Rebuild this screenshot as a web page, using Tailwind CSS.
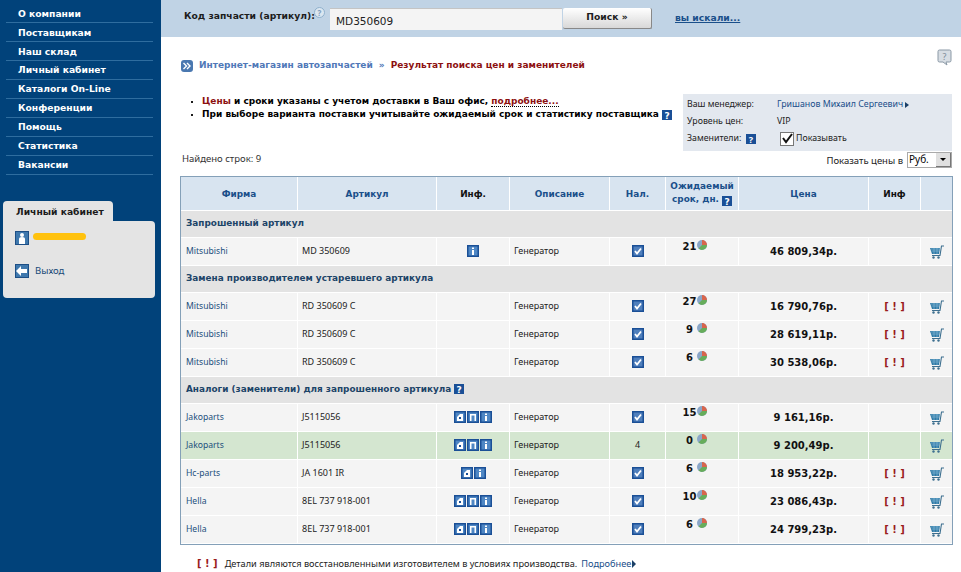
<!DOCTYPE html>
<html lang="ru">
<head>
    <meta charset="UTF-8">
    <meta name="viewport" content="width=device-width, initial-scale=1.0">
    <title>Результат поиска цен и заменителей</title>
    <script src="https://cdn.jsdelivr.net/npm/@tailwindcss/browser@4"></script>
</head>
<body class="bg-white font-['Noto_Sans',sans-serif] text-[9.5px] text-black overflow-hidden">
<div class="flex h-[572px] w-[961px] overflow-hidden">

    <!-- Sidebar -->
    <aside class="w-[161px] shrink-0 bg-[#01427a]">
        <nav class="pt-[4px] pl-[6px] pr-[8px] font-['DejaVu_Sans',sans-serif] text-[9.2px] font-bold text-white">
            <a class="block h-[19px] pl-[12px] leading-[19px] border-b border-[#2f6d9f]">О компании</a>
            <a class="block h-[19px] pl-[12px] leading-[19px] border-b border-[#2f6d9f]">Поставщикам</a>
            <a class="block h-[19px] pl-[12px] leading-[19px] border-b border-[#2f6d9f]">Наш склад</a>
            <a class="block h-[19px] pl-[12px] leading-[18px] border-b border-[#2f6d9f]">Личный кабинет</a>
            <a class="block h-[19px] pl-[12px] leading-[18px] border-b border-[#2f6d9f]">Каталоги On-Line</a>
            <a class="block h-[19px] pl-[12px] leading-[18px] border-b border-[#2f6d9f]">Конференции</a>
            <a class="block h-[19px] pl-[12px] leading-[18px] border-b border-[#2f6d9f]">Помощь</a>
            <a class="block h-[19px] pl-[12px] leading-[18px] border-b border-[#2f6d9f]">Статистика</a>
            <a class="block h-[19px] pl-[12px] leading-[18px] border-b border-[#2f6d9f]">Вакансии</a>
        </nav>

        <!-- Cabinet panel -->
        <div class="mt-[26px] ml-[3px] w-[152px]">
            <div class="w-[110px] h-[20px] bg-[#e4e4e4] rounded-t-[4px] pl-[13px] leading-[22px] font-['DejaVu_Sans',sans-serif] text-[9.2px] font-bold text-[#1c1c1c] whitespace-nowrap">Личный кабинет</div>
            <div class="h-[77px] bg-[#e4e4e4] rounded-b-[4px] rounded-tr-[4px] pl-[12px] pt-[10px]">
                <div class="flex items-center h-[14px]">
                    <svg width="14" height="14" viewBox="0 0 14 14"><rect width="14" height="14" fill="#3f78ad"/><rect x=".5" y=".5" width="13" height="13" fill="none" stroke="#1d4f86"/><circle cx="7" cy="4" r="2" fill="#fff"/><path d="M4 13V8q0-2 3-2t3 2v5z" fill="#fff"/></svg>
                    <span class="ml-[4px] mt-[-3px] w-[53px] h-[7px] rounded-full bg-[#ffc20e]"></span>
                </div>
                <div class="flex items-center h-[14px] mt-[19px] text-[#1a4a78]">
                    <svg width="14" height="14" viewBox="0 0 14 14"><rect width="14" height="14" fill="#3f78ad"/><rect x=".5" y=".5" width="13" height="13" fill="none" stroke="#1d4f86"/><path d="M1 7l5-5v3h6v4H6v3z" fill="#fff"/></svg>
                    <span class="ml-[6px]">Выход</span>
                </div>
            </div>
        </div>
    </aside>

    <main class="flex-1 flex flex-col min-w-0">
        <!-- Search bar -->
        <div class="h-[37px] shrink-0 bg-[#c0d3e5] flex pl-[23px] pt-[8px]">
            <span class="w-[128px] pt-[1px] font-['DejaVu_Sans',sans-serif] text-[9.2px] font-bold text-[#1c1c1c] leading-[14px] whitespace-nowrap">Код запчасти (артикул):</span>
            <svg class="mt-[-1px] ml-[2px]" width="11" height="11" viewBox="0 0 11 11"><circle cx="5.5" cy="5.5" r="5" fill="#dbe6f0" stroke="#8fb0cc"/><text x="5.5" y="8.5" text-anchor="middle" font-size="8" font-weight="700" fill="#7f9fbd">?</text></svg>
            <div class="ml-[5px] w-[232px] h-[22px] bg-[#f4f4f4] border-t border-[#c4c4c4] pl-[6px] leading-[24px] font-['DejaVu_Sans',sans-serif] text-[10.5px] text-[#222]">MD350609</div>
            <button class="ml-[1px] w-[89px] h-[21px] pb-[3px] rounded-[2px] bg-gradient-to-b from-white to-[#d8d8d8] border-b border-r border-[#888] font-['DejaVu_Sans',sans-serif] text-[9.2px] font-bold text-[#1c1c1c]">Поиск »</button>
            <a class="ml-[23px] pt-[3px] font-['DejaVu_Sans',sans-serif] text-[9.2px] font-bold text-[#1a4f8a] underline whitespace-nowrap">вы искали...</a>
        </div>

        <div class="pl-[20px] pr-[9px] flex-1">
            <!-- Breadcrumbs -->
            <div class="flex h-[57px]">
                <div class="flex items-center mt-[22px] h-[14px] font-['DejaVu_Sans',sans-serif] text-[9px] font-bold">
                    <svg width="12" height="12" viewBox="0 0 12 12"><rect width="12" height="12" rx="3" fill="#4a78b0"/><path d="M2.5 3l3 3-3 3M6 3l3 3-3 3" fill="none" stroke="#fff" stroke-width="1.4"/></svg>
                    <span class="ml-[6px] text-[#5078b8]">Интернет-магазин автозапчастей</span>
                    <span class="mx-[6px] text-[#5078b8]">»</span>
                    <span class="text-[#8c1010]">Результат поиска цен и заменителей</span>
                </div>
                <svg class="ml-auto mt-[12px]" width="15" height="17" viewBox="0 0 15 17"><path d="M2.5 1h10q1.500 0 1.500 1.500v9q0 1.500-1.500 1.500H9l1 3-4-3H2.500Q1 13 1 11.500v-9Q1 1 2.500 1z" fill="#d7dde3" stroke="#8b99a6"/><text x="7.500" y="10.500" text-anchor="middle" font-size="9" fill="#7d8b98">?</text></svg>
            </div>

            <!-- Notes and manager panel -->
            <div class="flex">
                <ul class="pt-[1px] pl-[10px] w-[502px] font-['DejaVu_Sans',sans-serif] text-[9px] font-bold leading-[13px] whitespace-nowrap">
                    <li class="flex items-center"><span class="w-[2px] h-[2px] bg-[#1c1c1c] mr-[9px]"></span><span><span class="text-[#8c1010]">Цены</span> и сроки указаны с учетом доставки в Ваш офис, <span class="text-[#8c1010] border-b border-dotted border-black">подробнее...</span></span></li>
                    <li class="flex items-center"><span class="w-[2px] h-[2px] bg-[#1c1c1c] mr-[9px]"></span><span>При выборе варианта поставки учитывайте ожидаемый срок и статистику поставщика</span>
                        <span class="ml-[3px]" data-icon="help"></span></li>
                </ul>
                <div class="w-[269px] h-[57px] bg-[#e3e8ef] pl-[4px] pt-[2px] text-[8.8px] text-[#222]">
                    <div class="flex h-[17px] items-center"><span class="w-[90px]">Ваш менеджер:</span><span class="text-[#1a4f8a] whitespace-nowrap">Гришанов Михаил Сергеевич</span><span class="ml-[2px] border-y-[3px] border-l-[4px] border-y-transparent border-l-[#1a3f66]"></span></div>
                    <div class="flex h-[17px] items-center"><span class="w-[90px]">Уровень цен:</span><span>VIP</span></div>
                    <div class="flex h-[17px] items-center"><span class="w-[59px] shrink-0">Заменители:</span><span class="w-[34px] shrink-0 flex" data-icon="help"></span>
                        <svg class="mr-[2px]" width="14" height="14" viewBox="0 0 14 14"><rect x=".5" y=".5" width="13" height="13" fill="#fff" stroke="#777"/><path d="M3 6l3 4 6-8" fill="none" stroke="#111" stroke-width="2"/></svg><span>Показывать</span></div>
                </div>
            </div>

            <!-- Found rows and currency -->
            <div class="flex h-[25px] items-start">
                <span class="mt-[1px] ml-[1px] text-[#333]">Найдено строк: 9</span>
                <span class="ml-auto mt-[3px] text-[#222]">Показать цены в</span>
                <div class="ml-[4px] mt-[1px] w-[45px] h-[16px] flex border border-[#aaa] bg-white text-[10px] leading-[13px] pl-[1px]">Руб.
                    <span class="ml-auto w-[15px] h-[14px] bg-[#e0e0e0] border-b border-r border-[#777] flex items-center justify-center"><span class="border-x-[3px] border-t-[3px] border-x-transparent border-t-black"></span></span>
                </div>
            </div>

            <!-- Results table -->
            <table class="ml-[-1px] w-[773px] table-fixed border-separate border-spacing-0 border border-[#84a0b8]">
                <colgroup>
                    <col class="w-[117px]"><col class="w-[139px]"><col class="w-[73px]"><col class="w-[100px]"><col class="w-[56px]"><col class="w-[73px]"><col class="w-[130px]"><col class="w-[52px]"><col>
                </colgroup>
                <thead>
                    <tr class="h-[34px] bg-[#d8e4f0] font-['DejaVu_Sans',sans-serif] text-[8.9px] font-bold text-[#1a4f8a]">
                        <th class="pt-[2px] border-r border-b border-white">Фирма</th>
                        <th class="pt-[2px] border-r border-b border-white">Артикул</th>
                        <th class="pt-[2px] border-r border-b border-white text-[#111]">Инф.</th>
                        <th class="pt-[2px] border-r border-b border-white">Описание</th>
                        <th class="pt-[2px] border-r border-b border-white">Нал.</th>
                        <th class="border-r border-b border-white leading-[13px]">Ожидаемый<br>срок, дн. <span class="inline-block align-[-1px]" data-icon="help"></span></th>
                        <th class="pt-[2px] border-r border-b border-white">Цена</th>
                        <th class="pt-[2px] border-r border-b border-white text-[#111]">Инф</th>
                        <th class="border-b border-white"></th>
                    </tr>
                </thead>
                <tbody id="rows"></tbody>
            </table>

            <!-- Footnote -->
            <div class="flex items-center mt-[11px] ml-[16px] text-[9.2px] text-[#222] whitespace-nowrap">
                <span class="font-['DejaVu_Sans',sans-serif] font-bold text-[#9a1c1c] text-[10px]">[ ! ]</span>
                <span class="ml-[7px]">Детали являются восстановленными изготовителем в условиях производства.</span>
                <span class="ml-[4px] text-[#1a4f8a]">Подробнее</span>
                <span class="ml-[1px] border-y-[4px] border-l-[4px] border-y-transparent border-l-[#1a3f66]"></span>
            </div>
        </div>
    </main>
</div>

<script>
    // Small blue square icons
    const helpIcon = `<svg class="inline-block" width="10" height="10" viewBox="0 0 10 10"><rect width="10" height="10" fill="#1a4f96"/><text x="5" y="8.500" text-anchor="middle" font-size="9" font-weight="700" fill="#fff">?</text></svg>`;
    const squareIcon = inner => `<svg class="inline-block" width="12" height="12" viewBox="0 0 12 12"><rect width="12" height="12" fill="#1a4f96"/><rect x="1.500" y="1.500" width="9" height="9" fill="#4f87c4"/>${inner}</svg>`;
    const icons = {
        h: squareIcon(`<path d="M3 10V6l3-3h3v7z" fill="#fff"/><rect x="5" y="6" width="2" height="2" fill="#1a4f96"/>`),
        p: squareIcon(`<path d="M3 10V3h6v7H7.500V4.500h-3V10z" fill="#fff"/>`),
        i: squareIcon(`<rect x="5" y="2.500" width="2" height="1.500" fill="#fff"/><rect x="5" y="5" width="2" height="5" fill="#fff"/>`)
    };
    const checkIcon = `<svg class="inline-block" width="12" height="12" viewBox="0 0 12 12"><rect width="12" height="12" fill="#1a4f96"/><rect x="1.500" y="1.500" width="9" height="9" fill="#4f7fbc"/><path d="M3 6l2 2.500 4-5" fill="none" stroke="#fff" stroke-width="1.800"/></svg>`;
    const pieIcon = `<svg class="mt-[-3px]" width="10" height="10" viewBox="0 0 10 10"><circle cx="5" cy="5" r="5" fill="#8aa6c8"/><path d="M5 5V0a5 5 0 0 1 5 5z" fill="#d8654c"/><path d="M5 5h5a5 5 0 0 1-8.500 3.500z" fill="#67ad5b"/></svg>`;
    const cartIcon = `<svg class="inline-block" width="15" height="14" viewBox="0 0 15 14"><path d="M1 3h10l-1 6H3z" fill="#2f7aa6"/><path d="M2 4h9M2.500 6h8M5 3v6M8 3v6" stroke="#8fc0dc" stroke-width=".6"/><path d="M3 10.500h8L12.500 1H15" fill="none" stroke="#3d6f8f" stroke-width="1.100"/><circle cx="4.500" cy="12.500" r="1.200" fill="#3d6f8f"/><circle cx="9.500" cy="12.500" r="1.200" fill="#3d6f8f"/></svg>`;

    const rows = [
        { group: `Запрошенный артикул` },
        { firm: "Mitsubishi", code: "MD 350609", inf: "i", days: "21", price: "46 809,34р." },
        { group: `Замена производителем устаревшего артикула` },
        { firm: "Mitsubishi", code: "RD 350609 C", inf: "", days: "27", price: "16 790,76р.", warn: true },
        { firm: "Mitsubishi", code: "RD 350609 C", inf: "", days: "9", price: "28 619,11р.", warn: true },
        { firm: "Mitsubishi", code: "RD 350609 C", inf: "", days: "6", price: "30 538,06р.", warn: true },
        { group: `Аналоги (заменители) для запрошенного артикула ${helpIcon}` },
        { firm: "Jakoparts", code: "J5115056", inf: "hpi", days: "15", price: "9 161,16р." },
        { firm: "Jakoparts", code: "J5115056", inf: "hpi", days: "0", price: "9 200,49р.", stock: "4", green: true },
        { firm: "Hc-parts", code: "JA 1601 IR", inf: "hi", days: "6", price: "18 953,22р.", warn: true },
        { firm: "Hella", code: "8EL 737 918-001", inf: "hpi", days: "10", price: "23 086,43р.", warn: true },
        { firm: "Hella", code: "8EL 737 918-001", inf: "hpi", days: "6", price: "24 799,23р.", warn: true }
    ];

    const tbody = document.getElementById("rows");
    rows.forEach(row => {
        const tr = document.createElement("tr");
        if (row.group) {
            tr.className = "h-[27px] bg-[#e3e3e3]";
            tr.innerHTML = `<td colspan="9" class="pl-[5px] pb-[1px] border-b border-white font-['DejaVu_Sans',sans-serif] text-[8.9px] font-bold text-[#1c4468]">${row.group}</td>`;
        } else {
            tr.className = row.green ? "h-[28px] bg-[#d4e6d0]" : "h-[28px] bg-[#f4f4f4]";
            const inf = row.inf.split("").map(k => icons[k]).join("");
            tr.innerHTML = `
                <td class="pl-[5px] pb-[1px] border-r border-b border-white text-[8.6px] text-[#1c4f7c]">${row.firm}</td>
                <td class="pl-[4px] pb-[1px] border-r border-b border-white text-[9px] text-[#222]">${row.code}</td>
                <td class="pb-[2px] border-r border-b border-white"><div class="flex justify-center gap-[1px]">${inf}</div></td>
                <td class="pl-[4px] pb-[1px] border-r border-b border-white text-[9px] text-[#222]">${row.desc || "Генератор"}</td>
                <td class="text-center pb-[2px] border-r border-b border-white text-[9px] text-[#222]">${row.stock || checkIcon}</td>
                <td class="pb-[10px] border-r border-b border-white font-['DejaVu_Sans',sans-serif] font-bold text-[10px] text-[#111]">
                    <div class="flex justify-center items-center pr-[15px] h-[12px]"><span class="w-[15px] text-center">${row.days}</span>${pieIcon}</div>
                </td>
                <td class="text-center pb-[1px] border-r border-b border-white font-['DejaVu_Sans',sans-serif] font-bold text-[10px] text-[#111]">${row.price}</td>
                <td class="text-center pb-[1px] border-r border-b border-white font-['DejaVu_Sans',sans-serif] font-bold text-[10px] text-[#9a1c1c]">${row.warn ? "[ ! ]" : ""}</td>
                <td class="text-center border-b border-white">${cartIcon}</td>`;
        }
        tbody.appendChild(tr);
    });

    // Fill in the help icons placed in the static markup
    document.querySelectorAll("[data-icon=help]").forEach(el => { el.innerHTML = helpIcon; });
</script>
</body>
</html>
